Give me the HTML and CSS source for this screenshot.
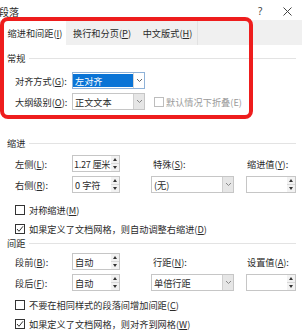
FILE: index.html
```html
<!DOCTYPE html>
<html lang="zh-CN">
<head>
    <meta charset="UTF-8">
    <title>段落</title>
    <link rel="stylesheet" href="styles.css">
</head>
<body>
    <div class="titlebar">
        <span class="title">段落</span>
        <span class="help">?</span>
        <span class="close">
            <svg width="9" height="9" viewBox="0 0 9 9"><path d="M0.5 0.5 L8.5 8.5 M8.5 0.5 L0.5 8.5" stroke="#444" stroke-width="1" fill="none"/></svg>
        </span>
    </div>

    <div class="tabs">
        <div class="tab tab-1 active">缩进和间距(<u>I</u>)</div>
        <div class="tab tab-2">换行和分页(<u>P</u>)</div>
        <div class="tab tab-3">中文版式(<u>H</u>)</div>
    </div>

    <!-- 常规 -->
    <div class="group-head head-general"><span>常规</span><i class="line"></i></div>
    <div class="general">
        <div class="row">
            <span class="label">对齐方式(<u>G</u>):</span>
            <div class="select sel-general focus">
                <div class="select-text"><span class="hl">左对齐</span></div>
                <div class="select-btn"><svg width="7" height="5" viewBox="0 0 7 5"><path d="M1 1 L3.5 3.5 L6 1" stroke="#666" fill="none"/></svg></div>
            </div>
        </div>
        <div class="row">
            <span class="label">大纲级别(<u>O</u>):</span>
            <div class="select sel-general">
                <div class="select-text">正文文本</div>
                <div class="select-btn"><svg width="7" height="5" viewBox="0 0 7 5"><path d="M1 1 L3.5 3.5 L6 1" stroke="#888" fill="none"/></svg></div>
            </div>
            <span class="check disabled"></span>
            <span class="muted">默认情况下折叠(E)</span>
        </div>
    </div>

    <!-- 缩进 -->
    <div class="group-head head-indent"><span>缩进</span><i class="line"></i></div>
    <div class="grid grid-indent">
        <span class="label">左侧(<u>L</u>):</span>
        <div class="spin c2">
            <div class="spin-text tight">1.27 厘米</div>
            <div class="spin-btns"><span class="up"></span><span class="down"></span></div>
        </div>
        <span class="label c4">特殊(<u>S</u>):</span>
        <span class="label c6">缩进值(<u>Y</u>):</span>

        <span class="label r2">右侧(<u>R</u>):</span>
        <div class="spin c2 r2">
            <div class="spin-text">0 字符</div>
            <div class="spin-btns"><span class="up"></span><span class="down"></span></div>
        </div>
        <div class="select c4 r2">
            <div class="select-text">(无)</div>
            <div class="select-btn"><svg width="7" height="5" viewBox="0 0 7 5"><path d="M1 1 L3.5 3.5 L6 1" stroke="#888" fill="none"/></svg></div>
        </div>
        <div class="spin c6 r2">
            <div class="spin-text"></div>
            <div class="spin-btns"><span class="up"></span><span class="down"></span></div>
        </div>
    </div>
    <div class="checks checks-indent">
        <div class="check-row"><span class="check"></span>对称缩进(<u>M</u>)</div>
        <div class="check-row"><span class="check on"><svg width="8" height="8" viewBox="0 0 8 8"><path d="M1 4 L3 6.3 L7 1.3" stroke="#333" stroke-width="1" fill="none"/></svg></span>如果定义了文档网格，则自动调整右缩进(<u>D</u>)</div>
    </div>

    <!-- 间距 -->
    <div class="group-head head-space"><span>间距</span><i class="line"></i></div>
    <div class="grid grid-space">
        <span class="label">段前(<u>B</u>):</span>
        <div class="spin c2">
            <div class="spin-text">自动</div>
            <div class="spin-btns"><span class="up"></span><span class="down"></span></div>
        </div>
        <span class="label c4">行距(<u>N</u>):</span>
        <span class="label c6">设置值(<u>A</u>):</span>

        <span class="label r2">段后(<u>F</u>):</span>
        <div class="spin c2 r2">
            <div class="spin-text">自动</div>
            <div class="spin-btns"><span class="up"></span><span class="down"></span></div>
        </div>
        <div class="select c4 r2">
            <div class="select-text">单倍行距</div>
            <div class="select-btn"><svg width="7" height="5" viewBox="0 0 7 5"><path d="M1 1 L3.5 3.5 L6 1" stroke="#888" fill="none"/></svg></div>
        </div>
        <div class="spin c6 r2">
            <div class="spin-text"></div>
            <div class="spin-btns"><span class="up"></span><span class="down"></span></div>
        </div>
    </div>
    <div class="checks checks-space">
        <div class="check-row"><span class="check"></span>不要在相同样式的段落间增加间距(<u>C</u>)</div>
        <div class="check-row"><span class="check on"><svg width="8" height="8" viewBox="0 0 8 8"><path d="M1 4 L3 6.3 L7 1.3" stroke="#333" stroke-width="1" fill="none"/></svg></span>如果定义了文档网格，则对齐到网格(<u>W</u>)</div>
    </div>

    <!-- 红色标注框 -->
    <div class="mark"></div>
</body>
</html>
```

FILE: styles.css
```css
* {
    box-sizing: border-box;
}
body {
    margin: 0;
    width: 302px;
    height: 336px;
    overflow: hidden;
    position: relative;
    background: #fff;
    font-family: "Noto Sans CJK SC", "Noto Sans", sans-serif;
    font-size: 9.2px;
    color: #2b2b2b;
}
u {
    text-decoration-thickness: 1px;
    text-underline-offset: 1px;
}

/* 标题栏 */
.titlebar {
    height: 20px;
    padding-top: 2px;
    display: flex;
    align-items: center;
}
.title {
    flex: 1;
    font-size: 10px;
    margin-left: -1px;
}
.help {
    width: 10px;
    margin-right: 15px;
    font-family: "Noto Sans", sans-serif;
    font-size: 10px;
    color: #444;
}
.close {
    width: 10px;
    margin-right: 9px;
    display: flex;
}

/* 选项卡 */
.tabs {
    height: 25px;
    background: #f0f0f0;
    display: flex;
    padding-left: 4px;
}
.tab {
    display: flex;
    align-items: center;
    justify-content: center;
}
.tab-1 {
    width: 62px;
    background: #fff;
}
.tab-2 {
    width: 72px;
}
.tab-3 {
    width: 60px;
    border-right: 1px solid #e2e2e2;
}

/* 分组标题 */
.group-head {
    height: 10px;
    display: flex;
    align-items: center;
    gap: 4px;
    padding: 0 6px 0 7px;
}
.group-head .line {
    flex: 1;
    height: 1px;
    background: #e3e3e3;
}
.head-general {
    margin-top: 8px;
}
.head-indent {
    margin-top: 26px;
}

/* 常规 */
.general {
    margin-top: 7px;
}
.general .row {
    height: 21px;
    display: flex;
    align-items: center;
    padding-left: 15px;
}
.label {
    display: flex;
    align-items: center;
    white-space: nowrap;
}
.general .label {
    width: 57px;
}
.sel-general {
    width: 73px;
}
.general .check {
    margin-left: 9px;
    margin-right: 2px;
}
.muted {
    color: #9a9a9a;
}

/* 下拉框 */
.select {
    height: 17px;
    display: flex;
    border: 1px solid #c6c6c6;
    background: #fff;
}
.select-text {
    flex: 1;
    display: flex;
    align-items: center;
    padding-left: 2px;
    white-space: nowrap;
}
.select-btn {
    width: 11px;
    display: flex;
    align-items: center;
    justify-content: center;
    background: #e6e6e6;
    border-left: 1px solid #cfcfcf;
}
.select.focus {
    border-color: #8fb2d8;
}
.select.focus .select-text {
    padding: 1px 0;
    align-items: stretch;
}
.select.focus .hl {
    flex: 1;
    display: flex;
    align-items: center;
    padding-left: 2px;
    background: #0a74d6;
    color: #fff;
}
.select.focus .select-btn {
    background: #fff;
    border-left-color: #d4d4d4;
}

/* 数值框 */
.spin {
    height: 17px;
    display: flex;
    border: 1px solid #c6c6c6;
    background: #fff;
}
.spin-text {
    flex: 1;
    min-width: 0;
    display: flex;
    align-items: center;
    padding-left: 2px;
    white-space: nowrap;
}
.spin-text.tight {
    padding-left: 1px;
    letter-spacing: -0.3px;
}
.spin-btns {
    width: 8px;
    flex: none;
    display: flex;
    flex-direction: column;
    background: #f2f2f2;
}
.spin-btns span {
    flex: 1;
    display: flex;
    align-items: center;
    justify-content: center;
}
.spin-btns .up {
    border-bottom: 1px solid #d8d8d8;
}
.spin-btns .up::before {
    content: "";
    border-left: 2.5px solid transparent;
    border-right: 2.5px solid transparent;
    border-bottom: 3px solid #333;
}
.spin-btns .down::before {
    content: "";
    border-left: 2.5px solid transparent;
    border-right: 2.5px solid transparent;
    border-top: 3px solid #333;
}

/* 网格行 */
.grid {
    display: grid;
    grid-template-columns: 57px 48px 31px 83px 12px 50px;
    grid-template-rows: 21px 21px;
    align-items: center;
    padding-left: 15px;
}
.grid-indent {
    margin-top: 5px;
}
.grid-space {
    margin-top: 3px;
}
.c2 { grid-column: 2; }
.c4 { grid-column: 4; }
.c6 { grid-column: 6; }
.r2 { grid-row: 2; }
.grid .label.c4 {
    padding-left: 2px;
}
.grid .label.c6 {
    padding-left: 1px;
}

/* 复选框 */
.checks-indent {
    margin-top: 5px;
}
.checks-space {
    margin-top: 2px;
}
.check-row {
    height: 19px;
    display: flex;
    align-items: center;
    padding-left: 15px;
    white-space: nowrap;
}
.check {
    width: 10px;
    height: 10px;
    border: 1px solid #333;
    background: #fff;
    display: inline-flex;
    align-items: center;
    justify-content: center;
    flex: none;
}
.check-row .check {
    margin-right: 4px;
}
.check.disabled {
    border-color: #bdbdbd;
}

/* 红色标注框 */
.mark {
    position: absolute;
    left: 0;
    top: 17px;
    width: 253px;
    height: 102px;
    border: 4px solid #ee1d1d;
    border-radius: 8px;
    pointer-events: none;
}
```
